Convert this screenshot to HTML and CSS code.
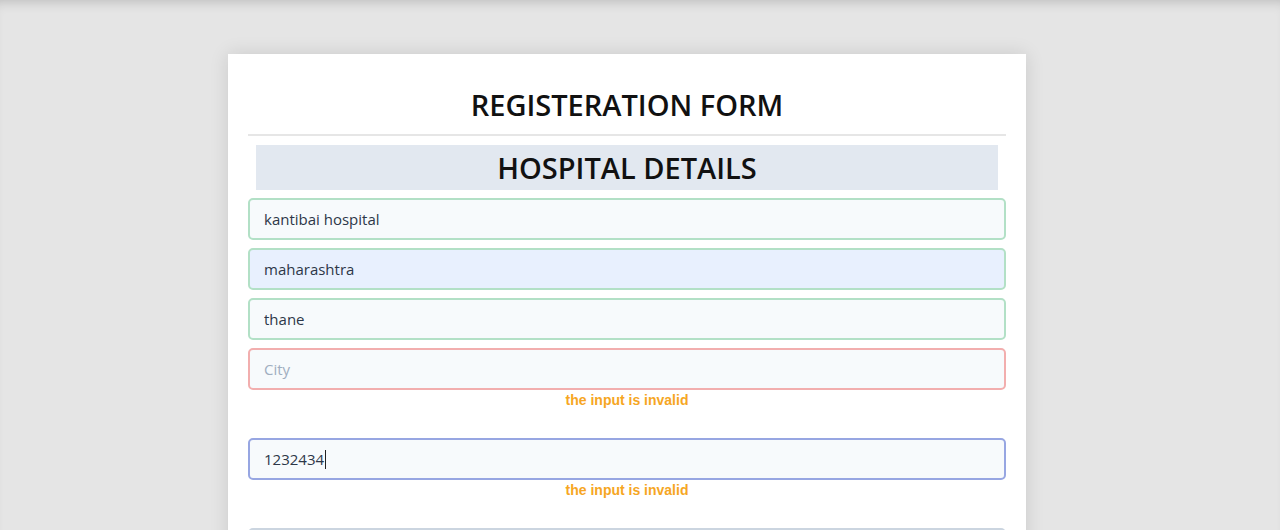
FILE: index.html
```html
<!DOCTYPE html>
<html lang="en">
<head>
<meta charset="utf-8">
<title>Registration Form</title>
<link rel="stylesheet" href="styles.css">
</head>
<body>
<div class="page">
  <form class="card">
    <h1 class="title">REGISTERATION FORM</h1>
    <hr class="divider">
    <h2 class="section">HOSPITAL DETAILS</h2>
    <div class="fields">
      <input class="field valid" type="text" value="kantibai hospital">
      <input class="field valid autofill" type="text" value="maharashtra">
      <input class="field valid" type="text" value="thane">
      <div class="group">
        <input class="field invalid" type="text" placeholder="City">
        <p class="error">the input is invalid</p>
      </div>
      <div class="group">
        <div class="caret-wrap">
          <input class="field focused" type="text" value="1232434">
          <span class="caret"></span>
        </div>
        <p class="error">the input is invalid</p>
      </div>
      <input class="field plain" type="text" placeholder="">
    </div>
  </form>
</div>
</body>
</html>
```

FILE: styles.css
```css
html, body {
  margin: 0;
  padding: 0;
  height: 100%;
}
body {
  background: #e5e5e5;
  font-family: "Open Sans", "Noto Sans", sans-serif;
  overflow: hidden;
}
.page {
  min-height: 100%;
  padding: 54px 0 0 228px;
  box-sizing: border-box;
  box-shadow: inset 0 10px 12px -8px rgba(0,0,0,0.18);
}
.card {
  width: 798px;
  background: #ffffff;
  box-shadow: 0 0 18px rgba(0,0,0,0.12);
  padding: 20px 20px 40px;
  box-sizing: border-box;
}
.title {
  margin: 12px 0 0;
  text-align: center;
  font-size: 29px;
  font-weight: 600;
  line-height: 38px;
  color: #111;
}
.divider {
  border: 0;
  height: 2px;
  background: #e6e6e6;
  margin: 10px 0 9px;
}
.section {
  margin: 0 8px 8px;
  background: #e2e8f0;
  text-align: center;
  font-size: 29px;
  font-weight: 600;
  line-height: 45px;
  color: #111;
}
.fields {
  display: flex;
  flex-direction: column;
  gap: 8px;
}
.group {
  display: flex;
  flex-direction: column;
}
.field {
  display: block;
  width: 100%;
  height: 42px;
  box-sizing: border-box;
  border: 2px solid #b2e0c6;
  border-radius: 5px;
  background: #f7fafc;
  padding: 0 14px;
  font-family: inherit;
  font-size: 15px;
  color: #2d3748;
  outline: none;
}
.field::placeholder {
  color: #a0aec0;
}
.autofill {
  background: #e8f0fe;
}
.invalid {
  border-color: #f2aeae;
}
.focused {
  border-color: #97a6e2;
}
.plain {
  border-color: #cbd5e0;
}
.caret-wrap {
  position: relative;
}
.caret {
  position: absolute;
  left: 77px;
  top: 12px;
  width: 1px;
  height: 19px;
  background: #222;
}
.error {
  margin: 2px 0 22px;
  text-align: center;
  font-family: "Liberation Sans", Arial, sans-serif;
  font-weight: 700;
  font-size: 14px;
  line-height: 16px;
  color: #f6a623;
}
```
